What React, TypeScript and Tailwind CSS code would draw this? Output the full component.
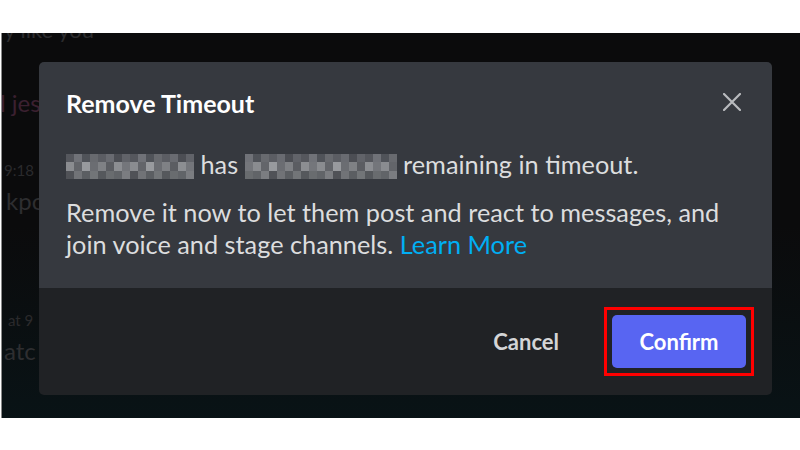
const font = "font-['Lato','Open_Sans',sans-serif]";

// pixelated grey blocks standing in for the blurred name / time
const shades = [
  "bg-[#6b6d72]",
  "bg-[#8a8c90]",
  "bg-[#5b5d62]",
  "bg-[#989a9e]",
  "bg-[#74767b]",
  "bg-[#7f8185]",
  "bg-[#63656a]",
  "bg-[#8c8e92]",
];

function Mosaic({ cells, seed }: { cells: number; seed: number }) {
  return (
    <span className="inline-flex flex-col align-middle h-[25px] -mt-[3px] overflow-hidden">
      <span className="flex h-[8px]">
        {Array.from({ length: cells }).map((_, i) => (
          <span key={i} className={`w-[8px] h-[8px] opacity-60 ${shades[(i * 3 + seed) % 8]}`} />
        ))}
      </span>
      <span className="flex h-[9px]">
        {Array.from({ length: cells }).map((_, i) => (
          <span key={i} className={`w-[8px] h-[9px] ${shades[(i * 5 + seed + 1) % 8]}`} />
        ))}
      </span>
      <span className="flex h-[8px]">
        {Array.from({ length: cells }).map((_, i) => (
          <span key={i} className={`w-[8px] h-[8px] opacity-70 ${shades[(i * 7 + seed + 2) % 8]}`} />
        ))}
      </span>
    </span>
  );
}

export default function App() {
  return (
    <div className={`w-[800px] h-[450px] bg-white pt-[33px] ${font}`}>
      <div className="relative h-[385px] w-[799px] ml-px border-l border-[#8a8a8a] bg-[#0b0b0c] overflow-hidden">
        {/* chat behind the overlay */}
        <div className="absolute inset-0 bg-gradient-to-t from-[#08161a] via-transparent to-transparent opacity-70" />
        <div className="absolute left-[2px] -top-[20px] text-[22px] text-[#2c2c2e]">y like you</div>
        <div className="absolute left-[-2px] top-[52px] text-[24px] text-[#3b2030]">l jes</div>
        <div className="absolute left-[2px] top-[126px] text-[15px] text-[#2a2a2c]">9:18</div>
        <div className="absolute left-[4px] top-[150px] text-[24px] text-[#2e2e30]">kpo</div>
        <div className="absolute left-[6px] top-[276px] text-[15px] text-[#2a2a2c]">at 9</div>
        <div className="absolute left-[2px] top-[300px] text-[24px] text-[#2e2e30]">atc</div>

        {/* modal */}
        <div className="absolute left-[37px] top-[29px] w-[733px] h-[333px] rounded-[5px] overflow-hidden flex flex-col">
          <div className="h-[226px] bg-[#36393f] px-[27px] pt-[25px]">
            <div className="flex items-center justify-between">
              <h1 className="text-[25px] leading-[32px] font-bold text-white">Remove Timeout</h1>
              <svg width="18" height="18" viewBox="0 0 18 18" className="mr-[4px] -mt-[3px] text-[#b9bbbe]">
                <path d="M1 1 L17 17 M17 1 L1 17" stroke="currentColor" strokeWidth="2.2" strokeLinecap="round" />
              </svg>
            </div>
            <p className="mt-[29px] text-[25.3px] leading-[32px] text-[#dcddde]">
              <Mosaic cells={16} seed={0} /> has <Mosaic cells={19} seed={3} /> remaining in timeout.
            </p>
            <p className="mt-[16px] text-[25.3px] leading-[32px] text-[#dcddde]">
              Remove it now to let them post and react to messages, and join voice and stage channels.{" "}
              <span className="text-[#00aff4]">Learn More</span>
            </p>
          </div>
          <div className="flex-1 bg-[#202225] flex items-center justify-end gap-[45px] pr-[18px]">
            <button className="text-[22px] font-bold text-[#d4d5d7]">Cancel</button>
            <div className="border-[3px] border-[#ff0000] p-[5px]">
              <button className="w-[134px] h-[53px] rounded-[5px] bg-[#5865f2] text-white text-[22px] font-bold block">
                Confirm
              </button>
            </div>
          </div>
        </div>
      </div>
    </div>
  );
}
